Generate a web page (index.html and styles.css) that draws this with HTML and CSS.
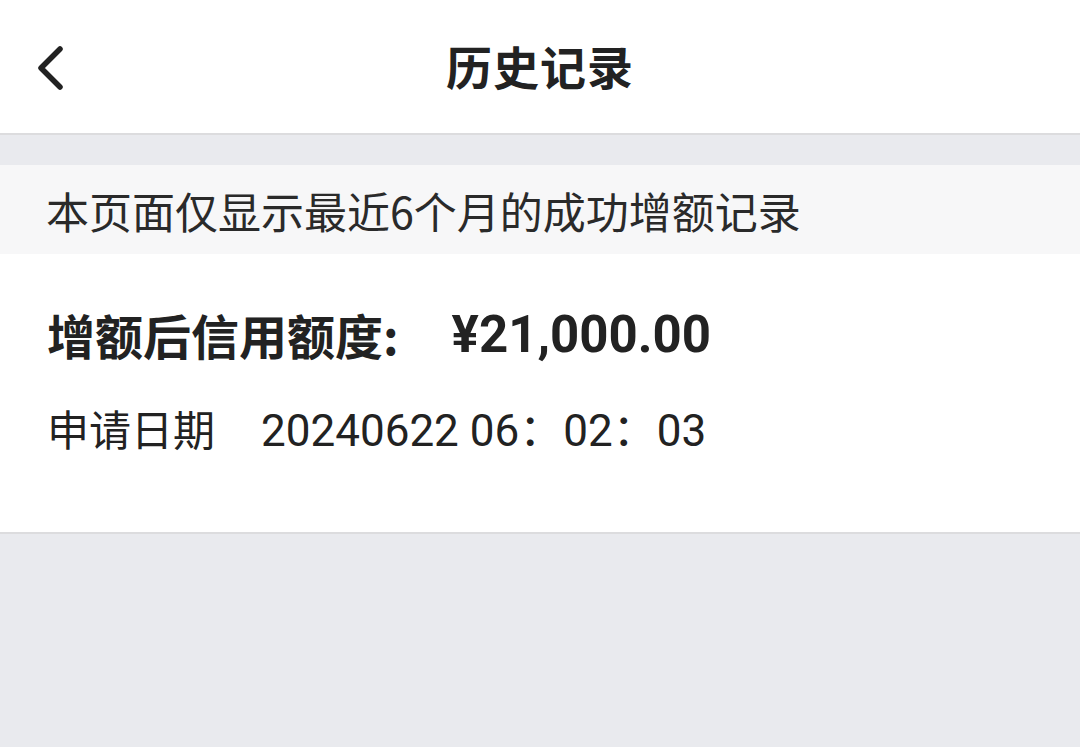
FILE: index.html
```html
<!DOCTYPE html>
<html lang="zh-CN">
<head>
	<meta charset="UTF-8">
	<title>历史记录</title>
	<link rel="stylesheet" href="styles.css">
</head>
<body>
	<div class="header">
		<a class="back">
			<svg width="28" height="44" viewBox="0 0 28 44">
				<path d="M24 3 L5 22 L24 41" fill="none" stroke="#222" stroke-width="5.5" stroke-linecap="round" stroke-linejoin="round"/>
			</svg>
		</a>
		<h1 class="title">历史记录</h1>
		<span></span>
	</div>

	<div class="notice">本页面仅显示最近6个月的成功增额记录</div>

	<div class="record">
		<div class="row limit">
			<span class="label">增额后信用额度:</span>
			<span class="amount">¥21,000.00</span>
		</div>
		<div class="row date">
			<span class="label">申请日期</span>
			<span class="time">20240622 06：02：03</span>
		</div>
	</div>
</body>
</html>
```

FILE: styles.css
```css
*{
	margin: 0;
	padding: 0;
}
body{
	background: #e9eaee;
	font-family: Roboto, "Noto Sans CJK SC", sans-serif;
	color: #222;
	height: 747px;
	overflow: hidden;
}
.header{
	height: 133px;
	background: #fff;
	border-bottom: 2px solid #dcdcde;
	display: grid;
	grid-template-columns: 1fr auto 1fr;
	align-items: center;
}
.back{
	display: flex;
	padding-left: 36px;
	padding-top: 2px;
}
.title{
	font-size: 46px;
	font-weight: bold;
	font-family: "Noto Sans CJK SC", sans-serif;
	color: #222;
	letter-spacing: 1px;
	margin-top: -3px;
}
.notice{
	margin-top: 30px;
	height: 89px;
	background: #f7f7f8;
	display: flex;
	align-items: center;
	padding-left: 46px;
	font-size: 43px;
	color: #2a2a2a;
	font-family: "Noto Sans CJK SC", sans-serif;
}
.record{
	height: 280px;
	background: #fff;
	border-bottom: 2px solid #dcdcde;
	padding: 50px 0 0 47px;
	box-sizing: border-box;
}
.row{
	display: flex;
	align-items: center;
	height: 60px;
}
.limit .label{
	font-size: 48px;
	font-weight: bold;
	font-family: "Noto Sans CJK SC", sans-serif;
}
.amount{
	margin-left: 53px;
	font-size: 51px;
	font-weight: bold;
}
.date{
	margin-top: 33px;
}
.date .label{
	font-size: 42px;
	font-family: "Noto Sans CJK SC", sans-serif;
}
.time{
	margin-left: 46px;
	font-size: 44px;
}
```
